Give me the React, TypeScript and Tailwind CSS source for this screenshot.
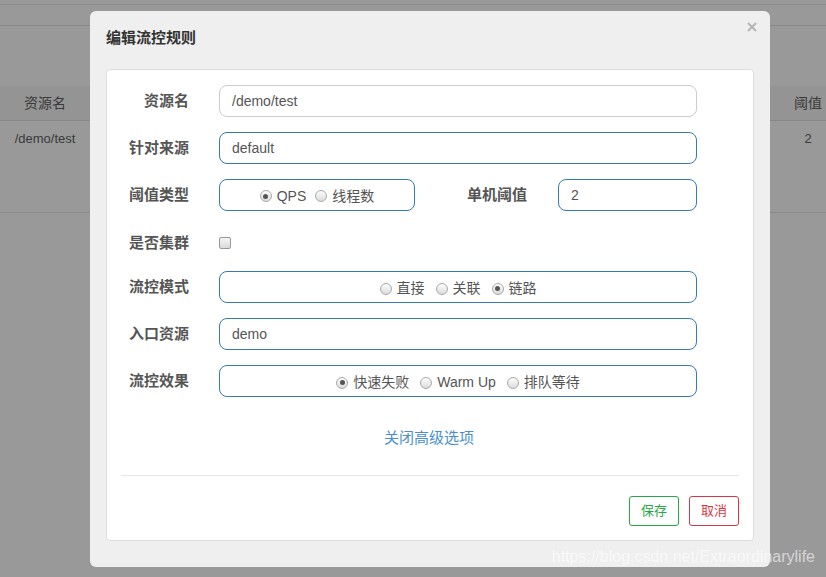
import React from "react";

const font = "font-['Liberation_Sans','Noto_Sans_CJK_SC',sans-serif]";

function Radio({ checked, label }: { checked?: boolean; label: string }) {
  return (
    <span className="flex items-center gap-[5px]">
      <span className="flex h-[12px] w-[12px] items-center justify-center rounded-full border border-[#a9a9a9] bg-gradient-to-b from-[#fdfdfd] to-[#dcdcdc]">
        {checked && <span className="h-[5px] w-[5px] rounded-full bg-[#555]" />}
      </span>
      <span className="text-[14px] text-[#555]">{label}</span>
    </span>
  );
}

function Row({ label, children }: { label: string; children: React.ReactNode }) {
  return (
    <div className="flex h-8 items-center">
      <div className="w-[82px] text-right text-[15px] font-bold text-[#555]">{label}</div>
      <div className="ml-[30px] flex h-full items-center">{children}</div>
    </div>
  );
}

const field = "flex h-8 items-center rounded-[8px] border border-[#337ab7] bg-white px-3 text-[14px] text-[#555]";

export default function App() {
  return (
    <div className={`relative h-[577px] w-full overflow-hidden bg-[#999] ${font}`}>
      {/* page behind the overlay */}
      <div className="mt-[4px] h-px bg-[#888]" />
      <div className="mt-[20px] h-px bg-[#888]" />
      <div className="mt-[60px] flex h-[34px] items-center justify-between bg-[#949494] text-[14px] text-[#3a3a3a]">
        <span className="w-[90px] text-center">资源名</span>
        <span className="w-[36px] text-center">阈值</span>
      </div>
      <div className="h-px bg-[#888]" />
      <div className="flex h-[91px] justify-between pt-[8px] text-[13px] text-[#3a3a3a]">
        <span className="w-[90px] text-center">/demo/test</span>
        <span className="w-[36px] text-center">2</span>
      </div>
      <div className="h-px bg-[#888]" />

      {/* modal */}
      <div className="absolute left-[90px] top-[11px] flex h-[556px] w-[680px] flex-col rounded-[6px] bg-[#efefef]">
        <div className="flex h-[58px] items-center px-4 pb-[4px] text-[15px] font-bold text-[#333]">编辑流控规则</div>
        <svg className="absolute right-[13px] top-[11px]" width="10" height="10" viewBox="0 0 10 10">
          <path d="M1 1L9 9M9 1L1 9" stroke="#b5b5b5" strokeWidth="2" />
        </svg>

        <div className="mx-4 flex h-[472px] flex-col rounded-[4px] border border-[#ddd] bg-white pt-[15px]">
          <div className="flex flex-col gap-[15px]">
            <Row label="资源名">
              <div className={`${field} w-[478px] border-[#ccc] bg-[#eee]`}>/demo/test</div>
            </Row>
            <Row label="针对来源">
              <div className={`${field} w-[478px]`}>default</div>
            </Row>
            <div className="flex h-8 items-center">
              <Row label="阈值类型">
                <div className={`${field} w-[196px] justify-center gap-[9px] pt-[2px]`}>
                  <Radio checked label="QPS" />
                  <Radio label="线程数" />
                </div>
              </Row>
              <div className="ml-[51px] w-[61px] text-right text-[15px] font-bold text-[#555]">单机阈值</div>
              <div className={`${field} ml-[31px] w-[139px]`}>2</div>
            </div>
            <div className="flex h-[30px] items-center pt-[4px]">
              <div className="w-[82px] text-right text-[15px] font-bold text-[#555]">是否集群</div>
              <span className="ml-[30px] h-[12px] w-[12px] rounded-[2px] border border-[#999] bg-gradient-to-b from-[#f5f5f5] to-[#dadada]" />
            </div>
            <Row label="流控模式">
              <div className={`${field} w-[478px] justify-center gap-[11px] pt-[3px]`}>
                <Radio label="直接" />
                <Radio label="关联" />
                <Radio checked label="链路" />
              </div>
            </Row>
            <Row label="入口资源">
              <div className={`${field} w-[478px]`}>demo</div>
            </Row>
            <Row label="流控效果">
              <div className={`${field} w-[478px] justify-center gap-[11px] pt-[3px]`}>
                <Radio checked label="快速失败" />
                <Radio label="Warm Up" />
                <Radio label="排队等待" />
              </div>
            </Row>
          </div>

          <div className="mt-[31px] ml-[277px] h-5 text-[15px] leading-5 text-[#4a8fcc]">关闭高级选项</div>
          <div className="mx-[14px] mt-[27px] h-px bg-[#e5e5e5]" />
          <div className="mt-[20px] flex justify-end gap-[10px] pr-[14px]">
            <button className="h-[30px] w-[50px] rounded-[3px] border border-[#28a745] bg-white text-[13px] text-[#28a745]">保存</button>
            <button className="h-[30px] w-[50px] rounded-[3px] border border-[#dc3545] bg-white text-[13px] text-[#dc3545]">取消</button>
          </div>
        </div>
      </div>

      <div className="absolute bottom-[8px] right-[11px] text-[16px] text-white/60">https://blog.csdn.net/Extraordinarylife</div>
    </div>
  );
}
